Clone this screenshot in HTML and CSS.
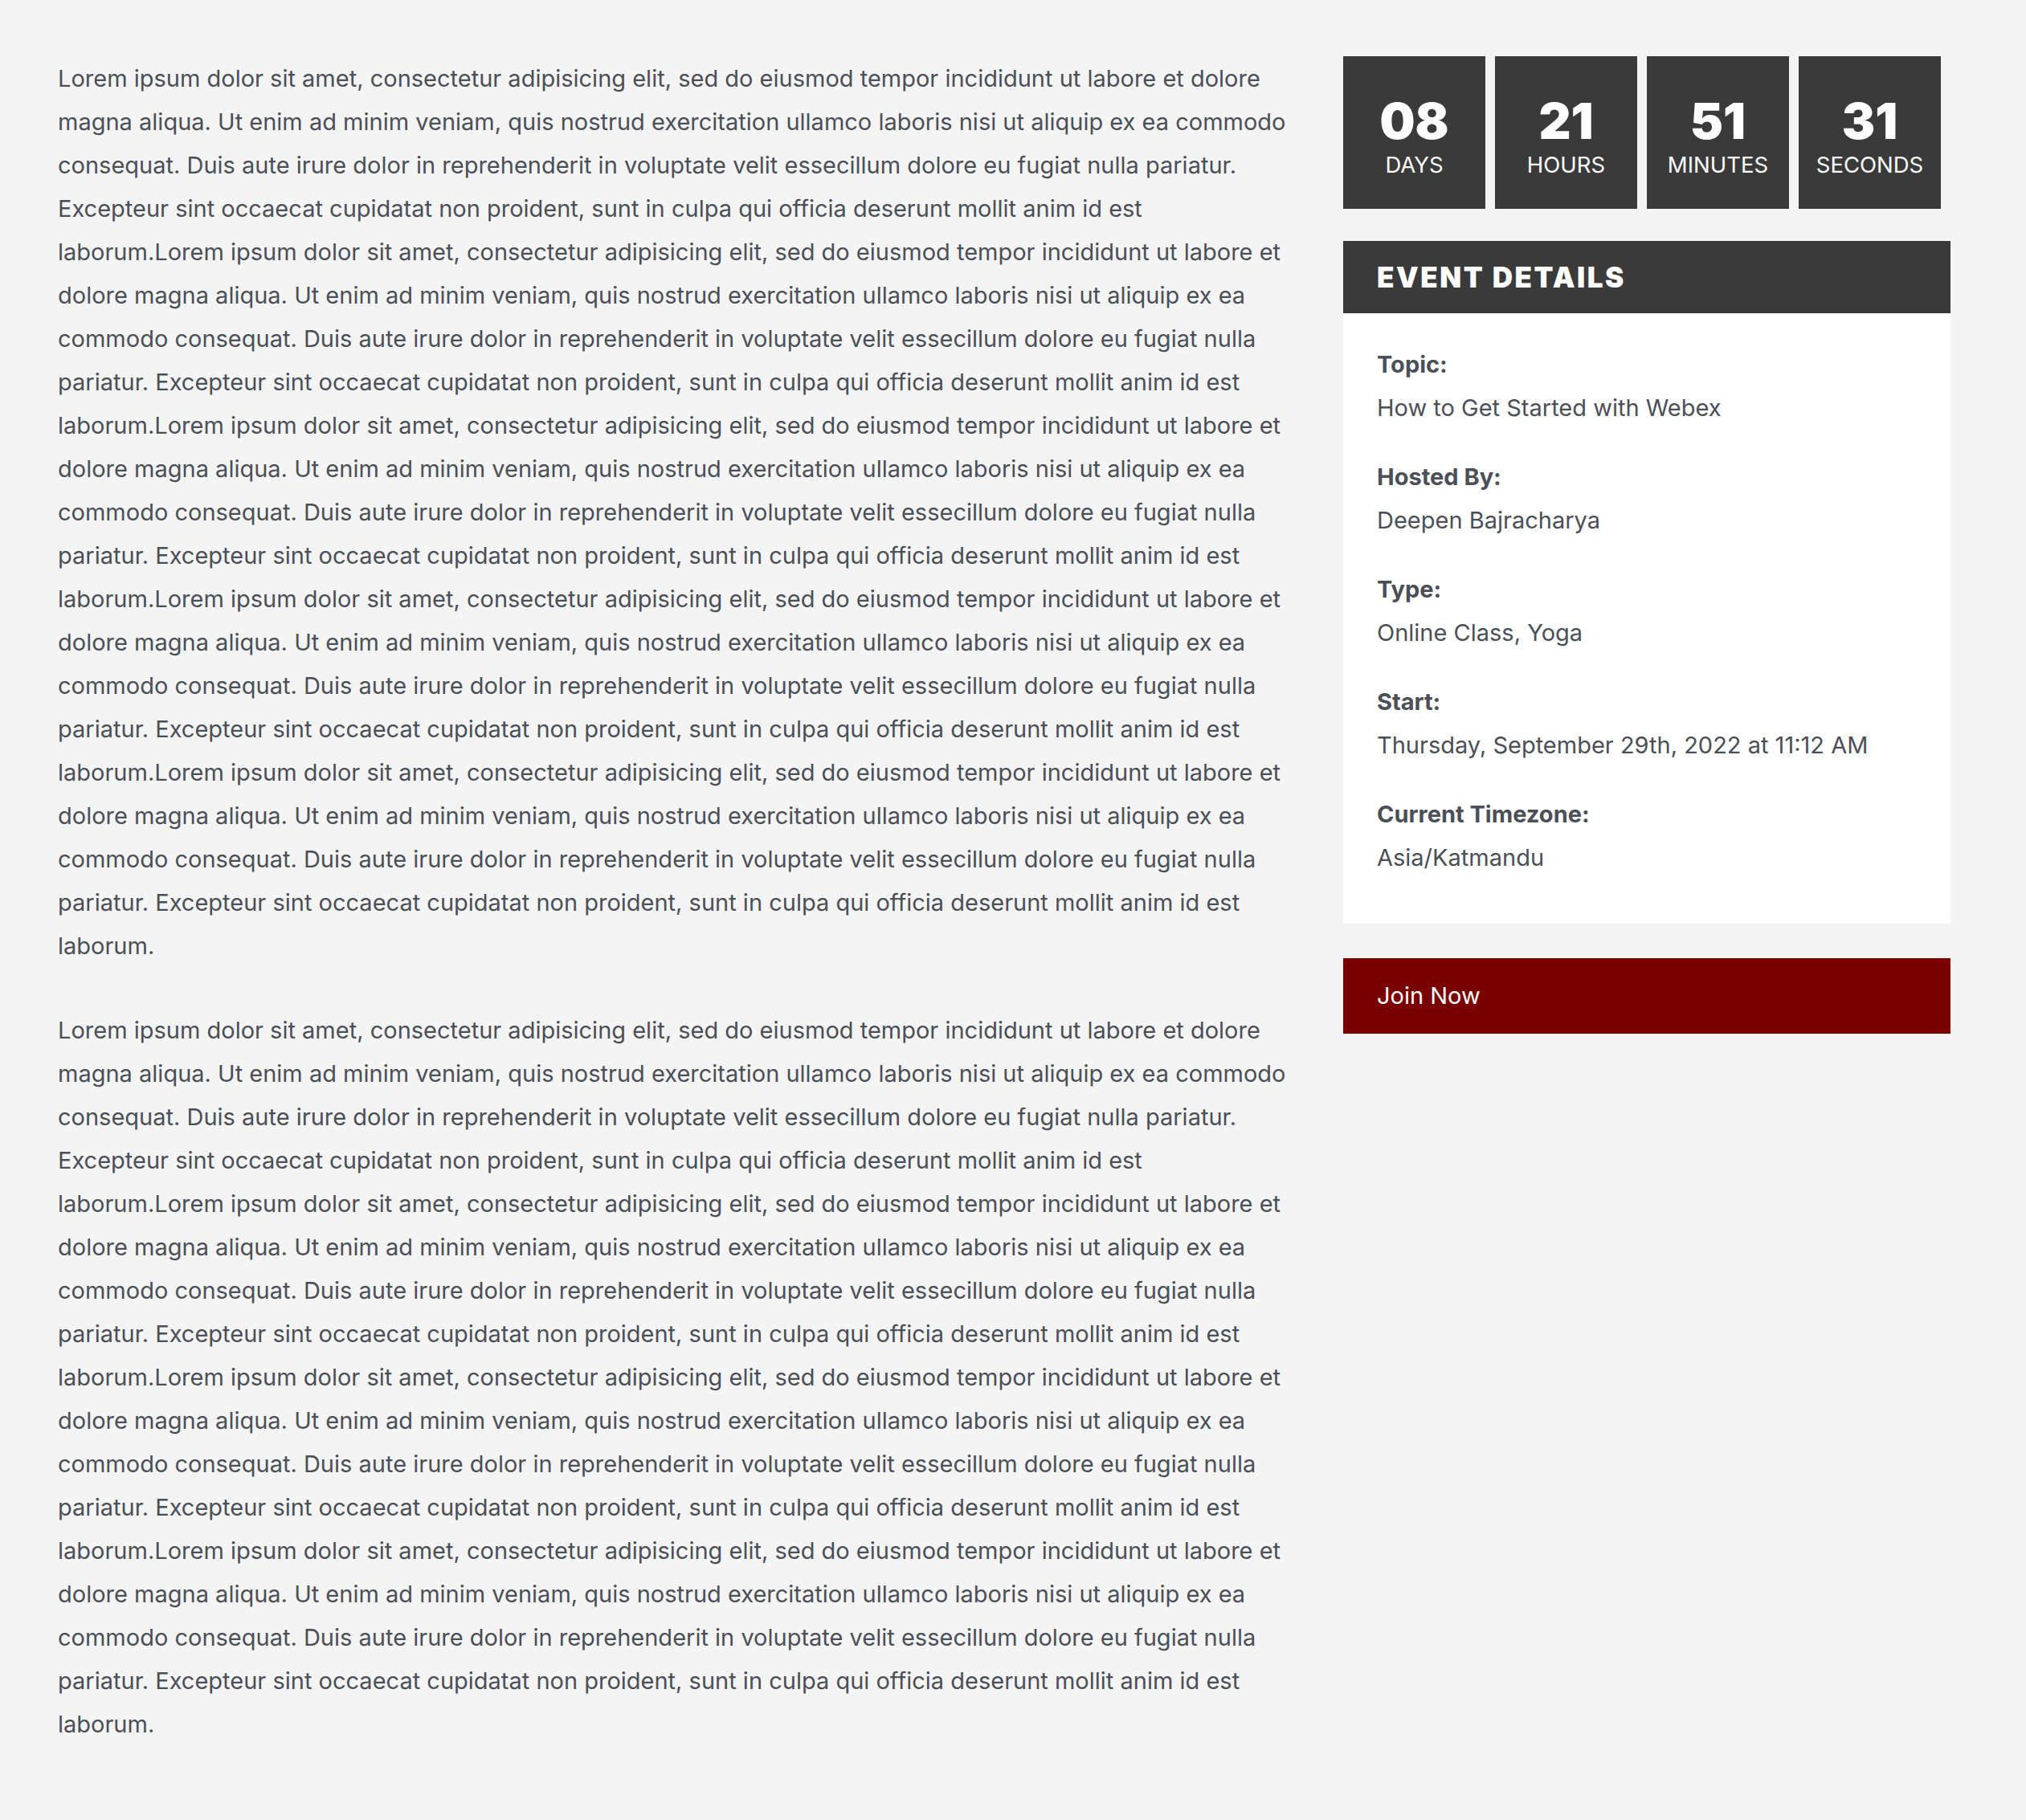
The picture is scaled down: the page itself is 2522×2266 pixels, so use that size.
FILE: index.html
```html
<!DOCTYPE html>
<html lang="en">
<head>
<meta charset="utf-8">
<title>Event</title>
<link rel="stylesheet" href="styles.css">
</head>
<body>
<div class="page">
  <main class="content">
    <p>Lorem ipsum dolor sit amet, consectetur adipisicing elit, sed do eiusmod tempor incididunt ut labore et dolore magna aliqua. Ut enim ad minim veniam, quis nostrud exercitation ullamco laboris nisi ut aliquip ex ea commodo consequat. Duis aute irure dolor in reprehenderit in voluptate velit essecillum dolore eu fugiat nulla pariatur. Excepteur sint occaecat cupidatat non proident, sunt in culpa qui officia deserunt mollit anim id est laborum.Lorem ipsum dolor sit amet, consectetur adipisicing elit, sed do eiusmod tempor incididunt ut labore et dolore magna aliqua. Ut enim ad minim veniam, quis nostrud exercitation ullamco laboris nisi ut aliquip ex ea commodo consequat. Duis aute irure dolor in reprehenderit in voluptate velit essecillum dolore eu fugiat nulla pariatur. Excepteur sint occaecat cupidatat non proident, sunt in culpa qui officia deserunt mollit anim id est laborum.Lorem ipsum dolor sit amet, consectetur adipisicing elit, sed do eiusmod tempor incididunt ut labore et dolore magna aliqua. Ut enim ad minim veniam, quis nostrud exercitation ullamco laboris nisi ut aliquip ex ea commodo consequat. Duis aute irure dolor in reprehenderit in voluptate velit essecillum dolore eu fugiat nulla pariatur. Excepteur sint occaecat cupidatat non proident, sunt in culpa qui officia deserunt mollit anim id est laborum.Lorem ipsum dolor sit amet, consectetur adipisicing elit, sed do eiusmod tempor incididunt ut labore et dolore magna aliqua. Ut enim ad minim veniam, quis nostrud exercitation ullamco laboris nisi ut aliquip ex ea commodo consequat. Duis aute irure dolor in reprehenderit in voluptate velit essecillum dolore eu fugiat nulla pariatur. Excepteur sint occaecat cupidatat non proident, sunt in culpa qui officia deserunt mollit anim id est laborum.Lorem ipsum dolor sit amet, consectetur adipisicing elit, sed do eiusmod tempor incididunt ut labore et dolore magna aliqua. Ut enim ad minim veniam, quis nostrud exercitation ullamco laboris nisi ut aliquip ex ea commodo consequat. Duis aute irure dolor in reprehenderit in voluptate velit essecillum dolore eu fugiat nulla pariatur. Excepteur sint occaecat cupidatat non proident, sunt in culpa qui officia deserunt mollit anim id est laborum.</p>
    <p>Lorem ipsum dolor sit amet, consectetur adipisicing elit, sed do eiusmod tempor incididunt ut labore et dolore magna aliqua. Ut enim ad minim veniam, quis nostrud exercitation ullamco laboris nisi ut aliquip ex ea commodo consequat. Duis aute irure dolor in reprehenderit in voluptate velit essecillum dolore eu fugiat nulla pariatur. Excepteur sint occaecat cupidatat non proident, sunt in culpa qui officia deserunt mollit anim id est laborum.Lorem ipsum dolor sit amet, consectetur adipisicing elit, sed do eiusmod tempor incididunt ut labore et dolore magna aliqua. Ut enim ad minim veniam, quis nostrud exercitation ullamco laboris nisi ut aliquip ex ea commodo consequat. Duis aute irure dolor in reprehenderit in voluptate velit essecillum dolore eu fugiat nulla pariatur. Excepteur sint occaecat cupidatat non proident, sunt in culpa qui officia deserunt mollit anim id est laborum.Lorem ipsum dolor sit amet, consectetur adipisicing elit, sed do eiusmod tempor incididunt ut labore et dolore magna aliqua. Ut enim ad minim veniam, quis nostrud exercitation ullamco laboris nisi ut aliquip ex ea commodo consequat. Duis aute irure dolor in reprehenderit in voluptate velit essecillum dolore eu fugiat nulla pariatur. Excepteur sint occaecat cupidatat non proident, sunt in culpa qui officia deserunt mollit anim id est laborum.Lorem ipsum dolor sit amet, consectetur adipisicing elit, sed do eiusmod tempor incididunt ut labore et dolore magna aliqua. Ut enim ad minim veniam, quis nostrud exercitation ullamco laboris nisi ut aliquip ex ea commodo consequat. Duis aute irure dolor in reprehenderit in voluptate velit essecillum dolore eu fugiat nulla pariatur. Excepteur sint occaecat cupidatat non proident, sunt in culpa qui officia deserunt mollit anim id est laborum.</p>
  </main>
  <aside class="sidebar">
    <div class="countdown">
      <div class="cd-box"><span class="cd-num">08</span><span class="cd-label">DAYS</span></div>
      <div class="cd-box"><span class="cd-num">21</span><span class="cd-label">HOURS</span></div>
      <div class="cd-box"><span class="cd-num">51</span><span class="cd-label">MINUTES</span></div>
      <div class="cd-box"><span class="cd-num">31</span><span class="cd-label">SECONDS</span></div>
    </div>
    <section class="details">
      <h2 class="details-title">EVENT DETAILS</h2>
      <div class="details-body">
        <div class="item"><div class="item-label">Topic:</div><div class="item-value">How to Get Started with Webex</div></div>
        <div class="item"><div class="item-label">Hosted By:</div><div class="item-value">Deepen Bajracharya</div></div>
        <div class="item"><div class="item-label">Type:</div><div class="item-value">Online Class, Yoga</div></div>
        <div class="item"><div class="item-label">Start:</div><div class="item-value">Thursday, September 29th, 2022 at 11:12 AM</div></div>
        <div class="item"><div class="item-label">Current Timezone:</div><div class="item-value">Asia/Katmandu</div></div>
      </div>
    </section>
    <a class="join" href="#">Join Now</a>
  </aside>
</div>
</body>
</html>
```

FILE: styles.css
```css
html, body {
  margin: 0;
  padding: 0;
  background: #f4f4f4;
}
body {
  font-family: Inter, "Noto Sans", sans-serif;
  color: #4b4f58;
  font-size: 29px;
  line-height: 54px;
}
.page {
  display: grid;
  grid-template-columns: 1530px 756px;
  column-gap: 70px;
  padding: 70px 0 0 72px;
  align-items: start;
}
.content {
  padding-top: 1px;
}
.content p {
  margin: 0 0 51px 0;
}
.sidebar {
  display: flex;
  flex-direction: column;
}
.countdown {
  display: flex;
  gap: 12px;
}
.cd-box {
  width: 177px;
  height: 190px;
  background: #3a3a3a;
  color: #fff;
  display: flex;
  flex-direction: column;
  align-items: center;
  padding-top: 49px;
  box-sizing: border-box;
}
.cd-num {
  font-weight: 900;
  font-size: 62px;
  line-height: 64px;
}
.cd-label {
  font-size: 27.5px;
  line-height: 40px;
  font-weight: 400;
  margin-top: 2px;
}
.details {
  margin-top: 40px;
}
.details-title {
  margin: 0;
  height: 90px;
  background: #3a3a3a;
  color: #fff;
  font-weight: 900;
  font-size: 35px;
  letter-spacing: 2.5px;
  line-height: 90px;
  padding: 0 42px;
}
.details-body {
  background: #fff;
  padding: 37px 42px 23px;
}
.item {
  margin-bottom: 32px;
}
.item-label {
  font-weight: 700;
}
.join {
  display: block;
  margin-top: 43px;
  height: 94px;
  line-height: 94px;
  background: #7a0000;
  color: #fff;
  text-decoration: none;
  padding: 0 42px;
}
```
